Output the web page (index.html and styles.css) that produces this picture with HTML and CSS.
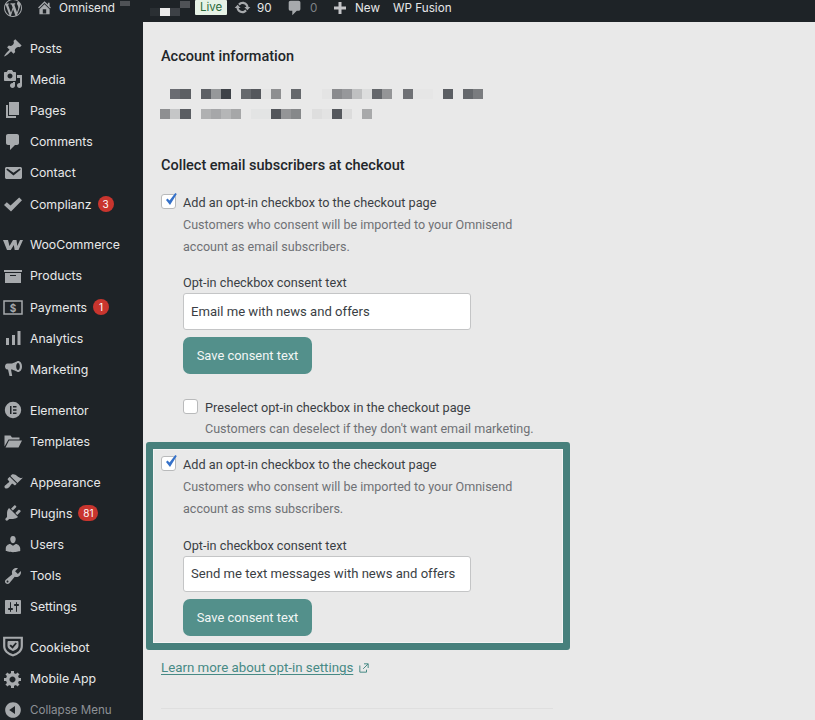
FILE: index.html
```html
<!DOCTYPE html>
<html lang="en">
<head>
<meta charset="utf-8">
<title>Omnisend settings</title>
<link rel="stylesheet" href="styles.css">
</head>
<body>
<header class="topbar">
  <svg class="tb-logo" viewBox="0 0 20 20"><path d="M20 10c0-5.51-4.49-10-10-10C4.48 0 0 4.49 0 10c0 5.52 4.48 10 10 10 5.51 0 10-4.48 10-10zM7.78 15.37L4.37 6.22c.55-.02 1.17-.08 1.17-.08.5-.06.44-1.13-.06-1.11 0 0-1.45.11-2.37.11-.18 0-.37 0-.58-.01C4.12 2.69 6.87 1.11 10 1.11c2.33 0 4.45.87 6.05 2.34-.68-.11-1.65.39-1.65 1.58 0 .74.45 1.36.9 2.1.35.61.55 1.36.55 2.46 0 1.49-1.4 5-1.4 5l-3.03-8.37c.54-.02.82-.17.82-.17.5-.05.44-1.25-.06-1.22 0 0-1.44.12-2.38.12-.87 0-2.33-.12-2.33-.12-.5-.03-.56 1.2-.06 1.22l.92.08 1.26 3.41zM17.41 10c.24-.64.74-1.87.43-4.25.7 1.29 1.05 2.71 1.05 4.25 0 3.29-1.73 6.24-4.4 7.78.97-2.59 1.94-5.2 2.92-7.78zM6.1 18.09C3.12 16.65 1.11 13.53 1.11 10c0-1.3.23-2.48.72-3.59C3.25 10.3 4.67 14.2 6.1 18.09zm4.03-6.63l2.58 6.98c-.86.29-1.76.45-2.71.45-.79 0-1.57-.11-2.29-.33.81-2.38 1.62-4.74 2.42-7.1z"/></svg>
  <svg class="tb-home" viewBox="0 0 20 20"><path d="M16 8.5l1.53 1.53-1.06 1.06L10 4.62l-6.47 6.47-1.06-1.06L10 2.5l4 4v-2h2v4zm-6-2.46l6 5.99V18H4v-5.97zM12 17v-5H8v5h4z"/></svg>
  <span class="tb-site">Omnisend</span>
  <svg class="tb-pixels" width="72" height="16" viewBox="0 0 72 16"><rect x="0" y="1" width="10" height="5" fill="#4f5256"/><rect x="30" y="8" width="10" height="8" fill="#2a2f33"/><rect x="40" y="8" width="10" height="8" fill="#e9e9e9"/><rect x="50" y="8" width="10" height="8" fill="#3d4146"/><rect x="60" y="1" width="10" height="7" fill="#4f5256"/></svg>
  <span class="tb-live">Live</span>
  <svg class="tb-sync" viewBox="0 0 20 20"><path d="M10.2 3.28c3.53 0 6.43 2.61 6.92 6h2.08l-3.5 4-3.5-4h2.32c-.45-1.97-2.21-3.45-4.32-3.45-1.45 0-2.73.71-3.54 1.78L4.95 5.66C6.23 4.2 8.11 3.28 10.2 3.28zm-.4 13.44c-3.52 0-6.43-2.61-6.92-6H.8l3.5-4c1.17 1.33 2.33 2.67 3.5 4H5.48c.45 1.97 2.21 3.45 4.32 3.45 1.45 0 2.73-.71 3.54-1.78l1.71 1.95c-1.28 1.46-3.15 2.38-5.25 2.38z"/></svg>
  <span class="tb-count">90</span>
  <svg class="tb-comment" viewBox="0 0 20 20"><path d="M5 2h9c1.1 0 2 .9 2 2v7c0 1.1-.9 2-2 2h-2l-5 5v-5H5c-1.1 0-2-.9-2-2V4c0-1.1.9-2 2-2z"/></svg>
  <span class="tb-zero">0</span>
  <svg class="tb-plus" viewBox="0 0 14 14"><path d="M5.5 1h3v4.500H13v3H8.500V13h-3V8.500H1v-3h4.500z"/></svg>
  <span class="tb-new">New</span>
  <span class="tb-fusion">WP Fusion</span>
</header>

<div class="shell">
  <nav class="sidebar">
    <ul class="menu">
      <li class="item"><span class="ico"><svg viewBox="0 0 20 20"><path d="M10.440 3.020l1.820-1.820 6.360 6.350-1.830 1.820c-1.050-.68-2.480-.57-3.410.36l-.75.75c-.92.93-1.040 2.350-.35 3.410l-1.830 1.820-2.410-2.410-2.800 2.790c-.42.42-3.380 2.710-3.800 2.290s1.860-3.390 2.280-3.810l2.790-2.790L4.100 9.360l1.830-1.820c1.050.69 2.480.57 3.400-.36l.75-.75c.93-.92 1.050-2.350.36-3.410z"/></svg></span>Posts</li>
      <li class="item"><span class="ico"><svg viewBox="0 0 20 20"><path d="M13 11V4c0-.55-.45-1-1-1h-1.670L9 1H5L3.670 3H2c-.55 0-1 .45-1 1v7c0 .55.45 1 1 1h10c.55 0 1-.45 1-1zM7 4.500c1.380 0 2.500 1.120 2.500 2.500S8.380 9.500 7 9.500 4.500 8.380 4.500 7 5.620 4.500 7 4.500zM14 6h5v10.500c0 1.380-1.120 2.500-2.500 2.500S14 17.880 14 16.500s1.120-2.500 2.500-2.500c.17 0 .34.02.5.05V9h-3V6zm-4 8.050V13h2v3.500c0 1.380-1.120 2.500-2.500 2.500S7 17.880 7 16.500 8.120 14 9.500 14c.17 0 .34.02.5.05z"/></svg></span>Media</li>
      <li class="item"><span class="ico"><svg viewBox="0 0 20 20"><path d="M6 15V2h10v13H6zm-1 1h8v2H3V5h2v11z"/></svg></span>Pages</li>
      <li class="item"><span class="ico"><svg viewBox="0 0 20 20"><path d="M5 2h9c1.100 0 2 .9 2 2v7c0 1.100-.9 2-2 2h-2l-5 5v-5H5c-1.100 0-2-.9-2-2V4c0-1.100.9-2 2-2z"/></svg></span>Comments</li>
      <li class="item"><span class="ico"><svg viewBox="0 0 20 20"><path d="M3.870 4h13.250C18.370 4 19 4.590 19 5.790v8.420c0 1.190-.63 1.790-1.880 1.790H3.870c-1.250 0-1.880-.6-1.880-1.790V5.790c0-1.200.63-1.790 1.880-1.790zm6.620 8.600l6.740-5.530c.24-.2.43-.66.13-1.070-.29-.41-.82-.42-1.170-.17l-5.700 3.860L4.800 5.830c-.35-.25-.88-.24-1.170.17-.3.41-.11.87.13 1.070z"/></svg></span>Contact</li>
      <li class="item"><span class="ico"><svg viewBox="0 0 20 20"><path d="M1 11l2.800-2.800 3.700 3.300L16.200 3.500 19 6.300 8 17.500z"/></svg></span>Complianz<span class="badge">3</span></li>
    </ul>
    <ul class="menu">
      <li class="item"><span class="ico"><svg viewBox="0 0 20 20"><path d="M0 5h5l1.500 6L10 5h3.500l.8 6L17 5h3l-4.500 10h-3.800l-.9-5-3 5H4z"/></svg></span>WooCommerce</li>
      <li class="item"><span class="ico"><svg viewBox="0 0 20 20"><path d="M19 4v2H1V4h18zM2 7h16v10H2V7zm11 3V9H7v1h6z"/></svg></span>Products</li>
      <li class="item"><span class="ico"><svg viewBox="0 0 20 20"><rect class="pay-frame" x="1" y="4" width="18" height="13"/><text class="pay-sign" x="10" y="14.500">$</text></svg></span>Payments<span class="badge">1</span></li>
      <li class="item"><span class="ico"><svg viewBox="0 0 20 20"><path d="M3 10h3v7H3zM9 7h3v10H9zM14.500 3h3v14h-3z"/></svg></span>Analytics</li>
      <li class="item"><span class="ico"><svg viewBox="0 0 20 20"><path d="M15 2c2.400 0 4 2.400 4 5.500S17.400 13 15 13c-.6 0-5-2.500-6.500-2.500H8l1.200 6.500H6.500L5 10.500H4.500C2.800 10.500 2 9 2 7.500S2.800 4.500 4.500 4.500H8.500C10 4.500 14.400 2 15 2zm0 2c-1.100 0-1.800 1.600-1.800 3.500S13.900 11 15 11s1.800-1.600 1.800-3.500S16.100 4 15 4z"/></svg></span>Marketing</li>
    </ul>
    <ul class="menu">
      <li class="item"><span class="ico"><svg viewBox="0 0 20 20"><path fill-rule="evenodd" d="M10 1.800a8.200 8.200 0 1 0 0 16.400 8.200 8.200 0 0 0 0-16.400zM7 6h1.500v8H7zm3 0h3.500v1.500H10zm0 3.200h3.500v1.500H10zm0 3.300h3.500V14H10z"/></svg></span>Elementor</li>
      <li class="item"><span class="ico"><svg viewBox="0 0 20 20"><path d="M1.500 15.500V4.500h6l1.500 2h7.500v2H5.500zM2.500 16.500l3.500-7h13l-3.500 7z"/></svg></span>Templates</li>
    </ul>
    <ul class="menu">
      <li class="item"><span class="ico"><svg viewBox="0 0 20 20"><path d="M14.480 11.060L7.410 3.990l1.500-1.500c.5-.56 2.300-.47 3.510.32 1.210.8 1.430 1.280 2.910 2.100 1.180.64 2.450 1.260 4.450.85zm-.71.71L6.700 4.700 4.930 6.470c-.39.39-.39 1.020 0 1.410l1.060 1.060c.39.39.39 1.030 0 1.420-.6.6-1.430 1.110-2.210 1.690-.35.26-.7.53-1.010.84C1.430 13.230.99 14.990 2 16s2.770.57 4.110-.77c.32-.31.59-.66.85-1.010.58-.78 1.090-1.610 1.690-2.210.39-.39 1.020-.39 1.410 0l1.060 1.060c.39.39 1.020.39 1.410 0z"/></svg></span>Appearance</li>
      <li class="item"><span class="ico"><svg viewBox="0 0 20 20"><path d="M13.110 4.360L9.870 7.600 8 5.730l3.240-3.240c.35-.34 1.050-.2 1.560.32.52.51.66 1.210.31 1.550zm-8 1.770l.91-1.120 9.010 9.010-1.190.84c-.71.71-2.630 1.160-3.820 1.160H6.140L4.900 17.260c-.59.59-1.540.59-2.120 0-.59-.58-.59-1.530 0-2.120l1.240-1.240v-3.880c0-1.130.4-3.190 1.090-3.890zm7.260 3.970l3.240-3.240c.34-.35 1.040-.21 1.550.31.52.51.66 1.210.31 1.550l-3.240 3.250z"/></svg></span>Plugins<span class="badge badge-wide">81</span></li>
      <li class="item"><span class="ico"><svg viewBox="0 0 20 20"><path d="M10 9.250c-2.270 0-2.730-3.440-2.730-3.440C7 4.020 7.820 2 9.970 2c2.160 0 2.980 2.020 2.710 3.810 0 0-.41 3.440-2.680 3.440zm0 2.570L12.720 10c2.390 0 4.520 2.330 4.520 4.530v2.490s-3.650 1.130-7.240 1.130c-3.650 0-7.240-1.130-7.240-1.130v-2.490c0-2.250 1.940-4.480 4.470-4.480z"/></svg></span>Users</li>
      <li class="item"><span class="ico"><svg viewBox="0 0 20 20"><path d="M16.680 9.770c-1.340 1.340-3.300 1.670-4.950.99l-5.410 6.520c-.99.99-2.590.99-3.580 0s-.99-2.590 0-3.570l6.520-5.420c-.68-1.650-.35-3.610.99-4.950 1.280-1.280 3.120-1.620 4.720-1.060l-2.890 2.890 2.820 2.820 2.860-2.870c.53 1.580.18 3.390-1.080 4.650zM3.810 16.210c.4.39 1.040.39 1.430 0 .4-.4.4-1.040 0-1.430-.39-.4-1.030-.4-1.430 0-.39.39-.39 1.030 0 1.430z"/></svg></span>Tools</li>
      <li class="item"><span class="ico"><svg viewBox="0 0 20 20"><path d="M18 16V4c0-.55-.45-1-1-1H3c-.55 0-1 .45-1 1v12c0 .55.45 1 1 1h14c.55 0 1-.45 1-1zM8 11h1c.55 0 1 .45 1 1s-.45 1-1 1H8v1.500c0 .28-.22.5-.5.5s-.5-.22-.5-.5V13H6c-.55 0-1-.45-1-1s.45-1 1-1h1V5.500c0-.28.22-.5.5-.5s.5.22.5.5V11zm5-2h-1c-.55 0-1-.45-1-1s.45-1 1-1h1V5.500c0-.28.22-.5.5-.5s.5.22.5.5V7h1c.55 0 1 .45 1 1s-.45 1-1 1h-1v5.500c0 .28-.22.5-.5.5s-.5-.22-.5-.5V9z"/></svg></span>Settings</li>
    </ul>
    <ul class="menu">
      <li class="item"><span class="ico ico-large"><svg viewBox="0 0 20 20"><path fill-rule="evenodd" d="M1 1.500h18V10c0 5-4 8-9 9.500C5 18 1 15 1 10zM3 3.500V10c0 3.800 3 6.200 7 7.400 4-1.200 7-3.600 7-7.400V3.500zM6 5.500h8c.6 0 1 .4 1 1V10c0 2-2.200 3.600-5 4.500C7.200 13.600 5 12 5 10V6.500c0-.6.4-1 1-1zm7.500 2.300L12.300 6.800 9.500 10 8 8.600 6.800 9.800 9.600 12.500z"/></svg></span>Cookiebot</li>
      <li class="item"><span class="ico"><svg viewBox="0 0 20 20"><path d="M18 12h-2.180c-.17.7-.44 1.350-.81 1.930l1.540 1.540-2.100 2.100-1.540-1.540c-.58.36-1.230.63-1.910.79V19H8v-2.180c-.68-.16-1.330-.43-1.910-.79l-1.540 1.540-2.120-2.120 1.540-1.540c-.36-.58-.63-1.230-.79-1.910H1V9.030h2.170c.16-.7.44-1.350.8-1.940L2.430 5.550l2.100-2.100 1.540 1.540c.58-.37 1.240-.64 1.930-.81V2h3v2.180c.68.16 1.330.43 1.910.79l1.540-1.540 2.120 2.120-1.540 1.540c.36.59.64 1.240.8 1.940H18V12zm-8.500 1.500c1.660 0 3-1.340 3-3s-1.340-3-3-3-3 1.340-3 3 1.340 3 3 3z"/></svg></span>Mobile App</li>
      <li class="item item-collapse"><span class="ico"><svg viewBox="0 0 20 20"><path d="M10 2.160c4.330 0 7.840 3.510 7.840 7.840s-3.510 7.840-7.840 7.840S2.160 14.330 2.160 10 5.710 2.160 10 2.160zm2 11.720V6.120L6.180 9.970z"/></svg></span>Collapse Menu</li>
    </ul>
  </nav>

  <main class="content">
    <h2 class="heading heading-account">Account information</h2>
    <svg class="pixels" width="326" height="30" viewBox="0 0 326 30">
      <rect x="10" y="0" width="10" height="10" fill="#6a6c72"/><rect x="20" y="0" width="11" height="10" fill="#5c5f63"/>
      <rect x="41" y="0" width="10" height="10" fill="#5d6065"/><rect x="51" y="0" width="10" height="10" fill="#96989a"/><rect x="61" y="0" width="10" height="10" fill="#3e4248"/>
      <rect x="81" y="0" width="10" height="10" fill="#66696d"/><rect x="91" y="0" width="10" height="10" fill="#54575c"/><rect x="101" y="0" width="10" height="10" fill="#e4e4e4"/><rect x="111" y="0" width="10" height="10" fill="#8e8f91"/>
      <rect x="131" y="0" width="10" height="10" fill="#65686c"/>
      <rect x="162" y="0" width="10" height="10" fill="#e4e4e4"/><rect x="172" y="0" width="10" height="10" fill="#8a8b8e"/><rect x="182" y="0" width="10" height="10" fill="#97989b"/><rect x="192" y="0" width="10" height="10" fill="#bfc0c1"/><rect x="202" y="0" width="10" height="10" fill="#dcdddd"/><rect x="212" y="0" width="10" height="10" fill="#64676b"/><rect x="222" y="0" width="10" height="10" fill="#949597"/>
      <rect x="243" y="0" width="10" height="10" fill="#6f7175"/><rect x="253" y="0" width="20" height="10" fill="#e6e6e6"/>
      <rect x="283" y="0" width="10" height="10" fill="#5b5e63"/>
      <rect x="303" y="0" width="10" height="10" fill="#65686c"/><rect x="313" y="0" width="10" height="10" fill="#7a7c7f"/>
      <rect x="0" y="20" width="10" height="10" fill="#8e8f91"/><rect x="10" y="20" width="10" height="10" fill="#c5c6c7"/><rect x="20" y="20" width="11" height="10" fill="#5a5d62"/>
      <rect x="41" y="20" width="10" height="10" fill="#b0b1b2"/><rect x="51" y="20" width="10" height="10" fill="#a6a7a9"/><rect x="61" y="20" width="10" height="10" fill="#b5b6b7"/><rect x="71" y="20" width="10" height="10" fill="#a6a7a8"/>
      <rect x="91" y="20" width="20" height="10" fill="#e3e4e4"/><rect x="111" y="20" width="10" height="10" fill="#53565b"/><rect x="121" y="20" width="10" height="10" fill="#949597"/><rect x="131" y="20" width="10" height="10" fill="#86888a"/>
      <rect x="152" y="20" width="10" height="10" fill="#dedede"/><rect x="162" y="20" width="10" height="10" fill="#e3e3e3"/><rect x="172" y="20" width="10" height="10" fill="#55585d"/><rect x="182" y="20" width="10" height="10" fill="#dcdcdc"/>
      <rect x="202" y="20" width="10" height="10" fill="#a8a9aa"/>
    </svg>

    <h2 class="heading heading-collect">Collect email subscribers at checkout</h2>

    <section class="optin">
      <div class="check-row">
        <span class="box"><svg class="tick" viewBox="0 0 11 12"><path d="M0 7l1.500-1.500 2 2L9.300 0l1.500 1L4 12z"/></svg></span>
        <div class="check-text">
          <p class="label">Add an opt-in checkbox to the checkout page</p>
          <p class="desc">Customers who consent will be imported to your Omnisend account as email subscribers.</p>
        </div>
      </div>
      <div class="consent">
        <p class="label">Opt-in checkbox consent text</p>
        <div class="input">Email me with news and offers</div>
        <button class="save" type="button">Save consent text</button>
      </div>
      <div class="check-row check-row-inner">
        <span class="box box-empty"></span>
        <div class="check-text">
          <p class="label">Preselect opt-in checkbox in the checkout page</p>
          <p class="desc desc-single">Customers can deselect if they don't want email marketing.</p>
        </div>
      </div>
    </section>

    <section class="optin optin-marked">
      <div class="check-row">
        <span class="box"><svg class="tick" viewBox="0 0 11 12"><path d="M0 7l1.500-1.500 2 2L9.300 0l1.500 1L4 12z"/></svg></span>
        <div class="check-text">
          <p class="label">Add an opt-in checkbox to the checkout page</p>
          <p class="desc">Customers who consent will be imported to your Omnisend account as sms subscribers.</p>
        </div>
      </div>
      <div class="consent">
        <p class="label">Opt-in checkbox consent text</p>
        <div class="input">Send me text messages with news and offers</div>
        <button class="save" type="button">Save consent text</button>
      </div>
    </section>

    <p class="learn"><a class="learn-link">Learn more about opt-in settings</a><svg class="ext" viewBox="0 0 12 12"><path d="M1 3v8h8V8M6 1h5v5M11 1L5 7"/></svg></p>
    <hr class="rule">
  </main>
</div>
</body>
</html>
```

FILE: styles.css
```css
* { box-sizing: border-box; }
html, body { margin: 0; padding: 0; }
body {
  width: 815px;
  height: 720px;
  overflow: hidden;
  display: flex;
  flex-direction: column;
  background: #e9e9e9;
  font-family: Roboto, "Liberation Sans", sans-serif;
}

/* top bar */
.topbar {
  flex: none;
  height: 22px;
  padding-bottom: 7px;
  background: #1e2327;
  display: flex;
  align-items: center;
  color: #e6e7e8;
  font-family: Inter, Roboto, sans-serif;
  font-size: 11.7px;
}
.topbar svg { flex: none; fill: #a7aaad; }
.tb-logo { width: 18px; height: 18px; margin-left: 4px; }
.tb-home { width: 17px; height: 17px; margin-left: 14px; }
.tb-site { width: 61px; margin-left: 6px; }
.topbar .tb-pixels { align-self: flex-start; }
.tb-live {
  align-self: flex-start;
  width: 32px;
  height: 15px;
  margin-left: 3px;
  background: #e6f2e6;
  color: #2c6b3b;
  text-align: center;
  line-height: 14px;
  font-size: 11.5px;
  border-radius: 1px;
}
.tb-sync { width: 17px; height: 17px; margin-left: 7px; }
.tb-count { width: 29px; margin-left: 6px; }
.tb-comment { width: 18px; height: 18px; }
.tb-zero { width: 23px; margin-left: 6px; color: #7d8185; }
.topbar .tb-plus { width: 14px; height: 14px; fill: #c3c4c7; }
.tb-new { width: 38px; margin-left: 8px; }

.shell { flex: 1; min-height: 0; display: flex; }

/* sidebar */
.sidebar {
  flex: none;
  width: 143px;
  padding-top: 10.500px;
  background: #1e2327;
  color: #e8e9ea;
  font-family: Inter, Roboto, sans-serif;
  font-size: 12.300px;
  overflow: hidden;
}
.menu { list-style: none; margin: 0 0 9.500px; padding: 0; }
.item { height: 31.200px; display: flex; align-items: center; white-space: nowrap; }
.item-collapse { color: #8d9196; font-size: 11.600px; }
.ico { flex: none; width: 20px; height: 20px; margin: 0 7px 0 3px; }
.ico svg { display: block; width: 20px; height: 20px; fill: #a7aaad; }
.ico-large svg { width: 22px; height: 22px; margin: -2px 0 0 -1px; }
.pay-frame { fill: none; stroke: #a7aaad; stroke-width: 1.500; }
.pay-sign { fill: #a7aaad; font-size: 10px; font-weight: 700; text-anchor: middle; }
.badge {
  width: 16px;
  height: 16px;
  margin-left: 6px;
  border-radius: 8px;
  background: #c9352e;
  color: #fff;
  font-size: 10px;
  line-height: 16px;
  text-align: center;
}
.badge-wide { width: 20px; }

/* content */
.content { flex: 1; min-width: 0; padding: 0 18px; color: #32373c; }
.heading { margin: 0; font-size: 14.500px; line-height: 20px; font-weight: 500; color: #22262a; }
.heading-account { margin-top: 25px; }
.pixels { display: block; margin: 22px 0 0 -1px; }
.heading-collect { margin-top: 37px; }

.optin { margin-top: 18px; }
.optin-marked {
  width: 424px;
  height: 208px;
  margin: 2px 0 0 -15px;
  padding: 7px 8px 0;
  border: 7px solid #47807c;
  border-radius: 3px;
  box-shadow: inset 0 0 0 1px rgba(255, 255, 255, .5);
}
.check-row { display: flex; align-items: flex-start; }
.check-row-inner { margin: 25px 0 0 22px; }
.box {
  flex: none;
  position: relative;
  width: 15px;
  height: 15px;
  margin-right: 7px;
  background: #fff;
  border: 1px solid #b9babb;
  border-radius: 3px;
}
.tick { position: absolute; left: 4px; top: -2.500px; width: 11px; height: 12px; fill: #3571c9; }
.check-text { width: 335px; }
.label { margin: 0; font-size: 12.700px; line-height: 18px; color: #3a3e44; }
.desc { margin: 2px 0 0; font-size: 12.550px; line-height: 22px; color: #6f7175; }
.desc-single { margin-top: 1px; }
.consent { margin: 16px 0 0 22px; }
.optin-marked .consent { margin-top: 17px; }
.input {
  width: 288px;
  height: 37px;
  margin-top: 1px;
  padding: 0 7px;
  background: #fff;
  border: 1px solid #c4c5c6;
  border-radius: 3px;
  font-size: 13.100px;
  line-height: 35px;
  color: #3a3e44;
  white-space: nowrap;
}
.optin-marked .input { height: 36px; line-height: 34px; }
.save {
  display: block;
  width: 129px;
  height: 37px;
  margin-top: 7px;
  padding: 0;
  background: #53908b;
  border: 0;
  border-radius: 7px;
  color: #f2f6f5;
  font-family: inherit;
  font-size: 12.900px;
}
.learn { margin: 8px 0 0; display: flex; align-items: center; font-size: 13.300px; line-height: 20px; }
.learn-link { color: #478a85; text-decoration: underline; text-underline-offset: 2px; }
.ext { width: 10px; height: 10px; margin-left: 6px; fill: none; stroke: #478a85; stroke-width: 1.200; }
.rule { width: 392px; height: 0; margin: 30px 0 0; border: 0; border-top: 1px solid #dfdfdf; }
```
